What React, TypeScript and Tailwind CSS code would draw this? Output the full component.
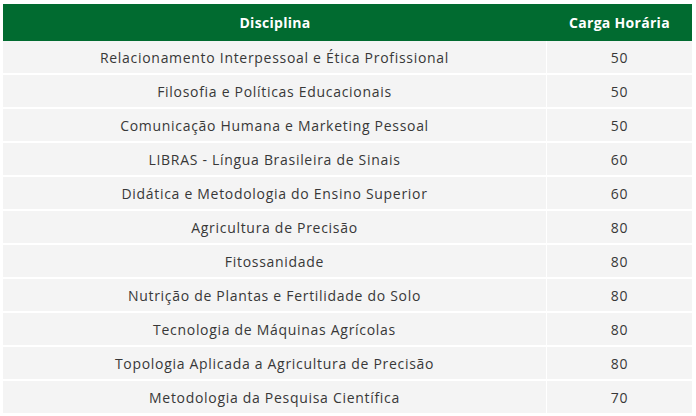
const rows: [string, number][] = [
  ["Relacionamento Interpessoal e Ética Profissional", 50],
  ["Filosofia e Políticas Educacionais", 50],
  ["Comunicação Humana e Marketing Pessoal", 50],
  ["LIBRAS - Língua Brasileira de Sinais", 60],
  ["Didática e Metodologia do Ensino Superior", 60],
  ["Agricultura de Precisão", 80],
  ["Fitossanidade", 80],
  ["Nutrição de Plantas e Fertilidade do Solo", 80],
  ["Tecnologia de Máquinas Agrícolas", 80],
  ["Topologia Aplicada a Agricultura de Precisão", 80],
  ["Metodologia da Pesquisa Científica", 70],
];

export default function App() {
  return (
    <div
      className="w-[696px] h-[416px] overflow-hidden bg-white pl-[3px] pr-[4px] pt-[4px]"
      style={{ fontFamily: '"Open Sans", "Noto Sans", sans-serif' }}
    >
      <div className="grid grid-cols-[544px_1fr]">
        <div className="h-[37px] bg-[#016b30] flex items-center justify-center text-white font-bold text-[14px] tracking-[0.3px]">
          Disciplina
        </div>
        <div className="h-[37px] bg-[#016b30] flex items-center justify-center text-white font-bold text-[14px] tracking-[0.3px]">
          Carga Horária
        </div>
        {rows.map(([name, hours]) => (
          <RowCells key={name} name={name} hours={hours} />
        ))}
      </div>
    </div>
  );
}

function RowCells({ name, hours }: { name: string; hours: number }) {
  return (
    <>
      <div className="h-[34px] bg-[#f4f4f4] border-b-2 border-r-[1.5px] border-white flex items-center justify-center text-[14px] text-[#383838] tracking-[0.7px]">
        {name}
      </div>
      <div className="h-[34px] bg-[#f4f4f4] border-b-2 border-white flex items-center justify-center text-[14px] text-[#383838] tracking-[0.7px]">
        {hours}
      </div>
    </>
  );
}
